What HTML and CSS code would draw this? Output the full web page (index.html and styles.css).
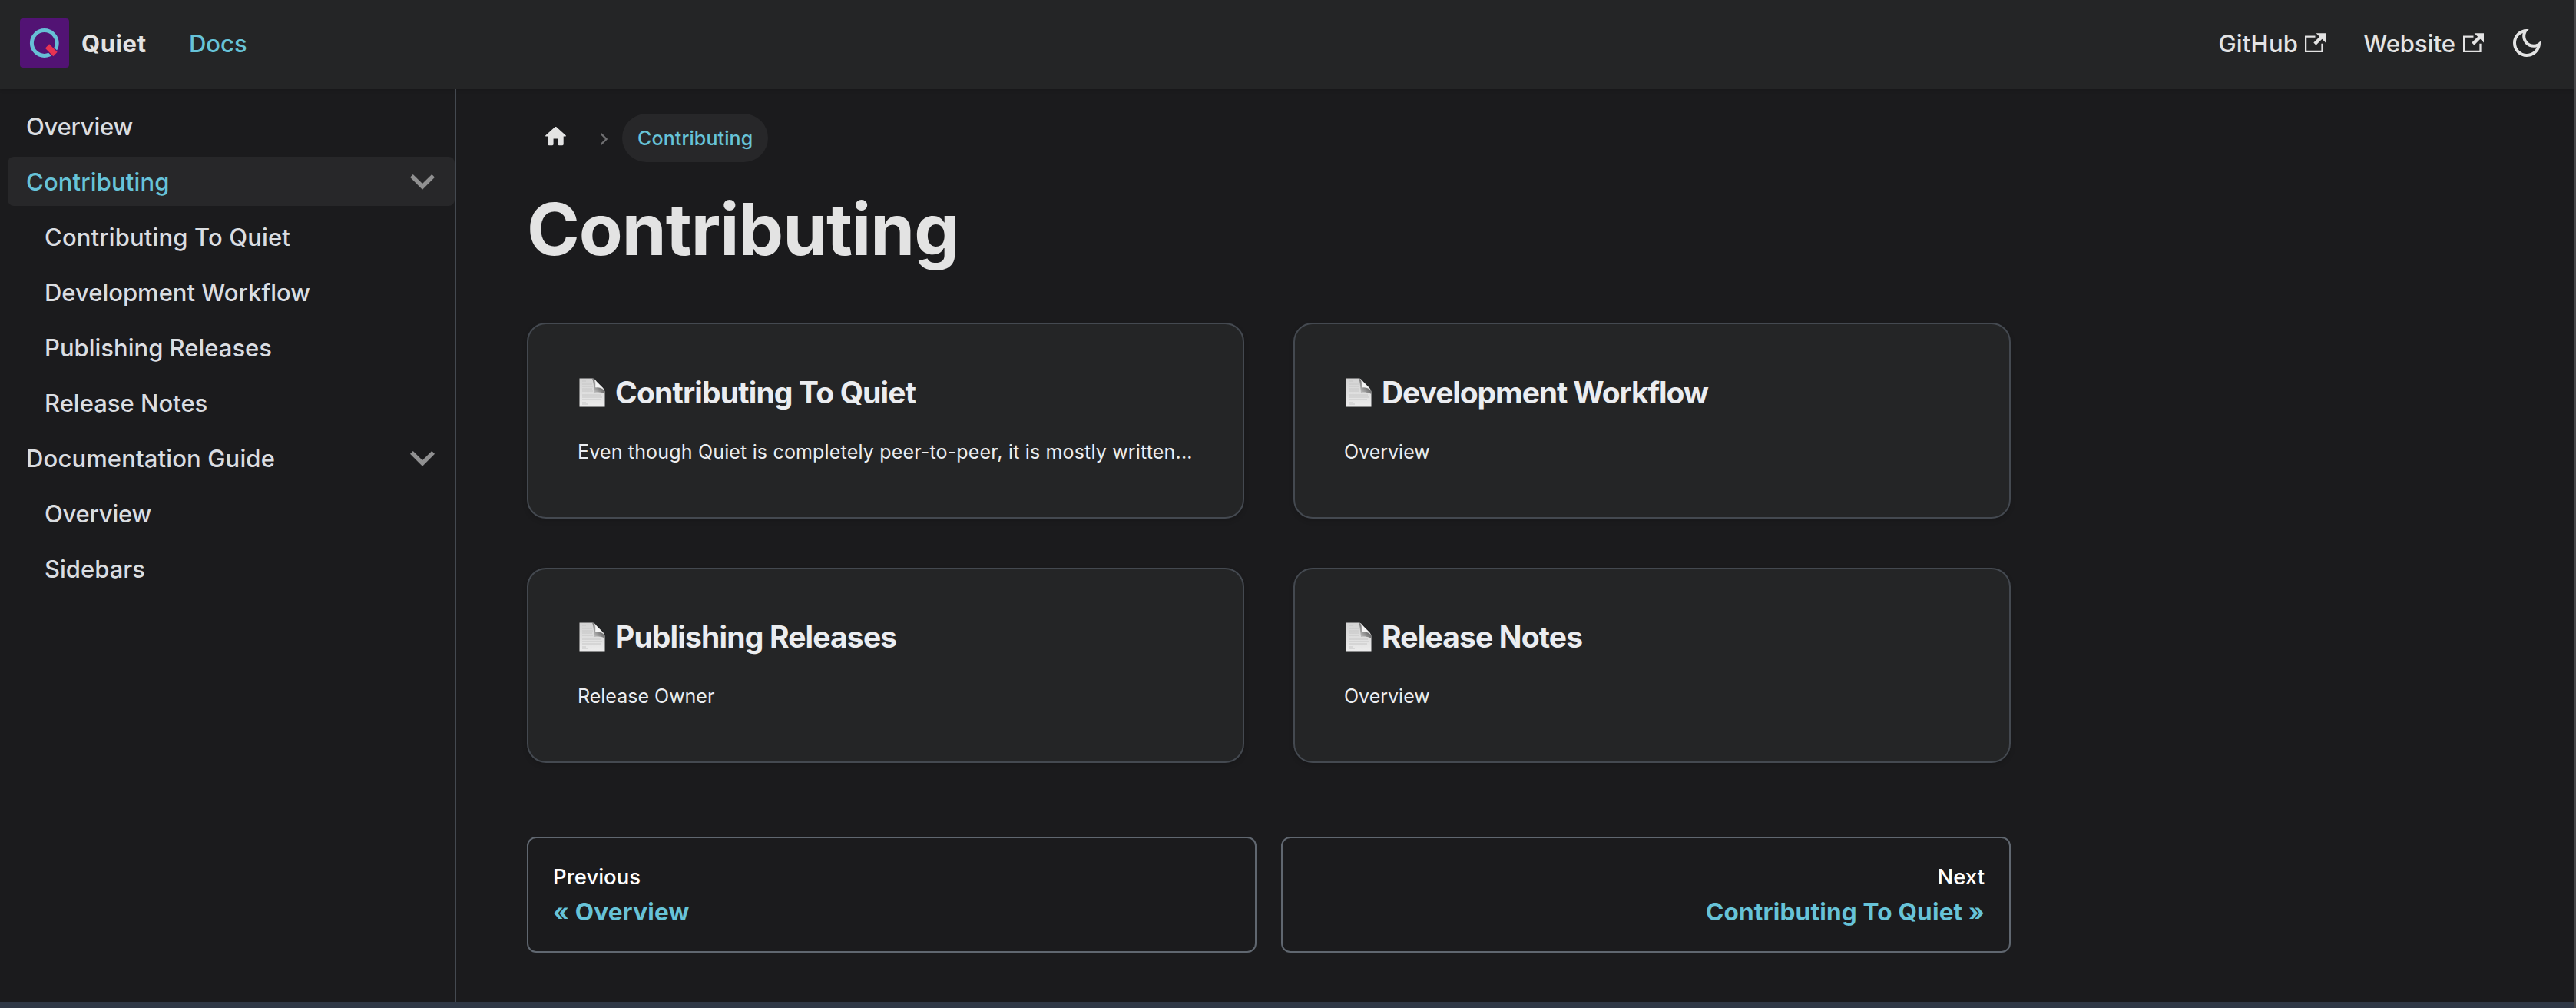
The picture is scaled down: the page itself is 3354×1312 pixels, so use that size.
FILE: index.html
```html
<!DOCTYPE html>
<html lang="en">
<head>
<meta charset="utf-8">
<title>Contributing | Quiet</title>
<link rel="stylesheet" href="styles.css">
</head>
<body>
<svg class="sprite" aria-hidden="true">
  <defs>
    <linearGradient id="paper" x1="0" y1="0" x2="0" y2="1">
      <stop offset="0" stop-color="#d3d3d3"/>
      <stop offset=".6" stop-color="#e0e0e0"/>
      <stop offset="1" stop-color="#ececec"/>
    </linearGradient>
    <linearGradient id="curl" x1="1" y1="0" x2="0" y2="1">
      <stop offset="0" stop-color="#3c3c3c"/>
      <stop offset=".5" stop-color="#7c7c7c"/>
      <stop offset="1" stop-color="#d8d8d8"/>
    </linearGradient>
    <symbol id="page" viewBox="0 0 34 38">
      <path d="M.5 .5H17C20 .5 21 2 23 5L31 13C33 15 33.500 17 33.500 19V37.500H.5Z" fill="url(#paper)"/>
      <path d="M17 .5C20 1 21 4 21 12C27 12 31 14 33.500 17V21C31 19 27 18 20 19C19 12 19 5 17 .5Z" fill="url(#curl)"/>
      <path d="M21 3L32 14C29 12 25 12 21.500 12.500C21.800 9 21.800 6 21 3Z" fill="#f4f4f4"/>
      <path d="M4 4H9M4 8H17M4 11H18M4 14H17M4 17H18M4 22H29M4 25H30M4 28H28M4 32H9M4 34H12" stroke="#c6c6c6" stroke-width="1" fill="none"/>
    </symbol>
    <symbol id="external" viewBox="0 0 24 24"><path d="M21 13v10h-21v-19h12v2h-10v15h17v-8h2zm3-12h-10.988l4.035 4-6.977 7.070 2.828 2.828 6.977-7.070 4.125 4.172v-11z"/></symbol>
    <symbol id="caret" viewBox="0 0 24 24"><path d="M7.410 8.590L12 13.170l4.590-4.580L18 10l-6 6-6-6z"/></symbol>
  </defs>
</svg>

<nav class="navbar">
  <a class="brand">
    <svg class="logo" viewBox="0 0 64 64">
      <rect width="64" height="64" rx="4" fill="#521374"/>
      <circle cx="31.800" cy="32" r="16.400" fill="none" stroke="#67bfd6" stroke-width="5"/>
      <path d="M35.500 36L48 48.500" stroke="#521374" stroke-width="10"/>
      <path d="M35.500 36L46 46.500" stroke="#e93352" stroke-width="7.500"/>
    </svg>
    <b class="brand-name">Quiet</b>
  </a>
  <a class="nav-link nav-link-active">Docs</a>
  <a class="nav-link nav-github">GitHub<svg class="ext"><use href="#external"/></svg></a>
  <a class="nav-link nav-website">Website<svg class="ext"><use href="#external"/></svg></a>
  <svg class="moon" viewBox="0 0 24 24"><path d="M9.370,5.510C9.190,6.150,9.100,6.820,9.100,7.500c0,4.080,3.320,7.400,7.400,7.400c0.680,0,1.350-0.090,1.990-0.270C17.450,17.190,14.930,19,12,19 c-3.860,0-7-3.140-7-7C5,9.070,6.810,6.550,9.370,5.510z M12,3c-4.970,0-9,4.030-9,9s4.030,9,9,9s9-4.030,9-9c0-0.460-0.040-0.920-0.100-1.360 c-0.980,1.370-2.580,2.260-4.400,2.260c-2.980,0-5.400-2.420-5.400-5.400c0-1.810,0.890-3.420,2.260-4.400C12.920,3.040,12.460,3,12,3L12,3z"/></svg>
</nav>

<div class="columns">
  <aside class="sidebar">
    <a class="item snug"><span>Overview</span></a>
    <a class="item item-active"><span>Contributing</span><svg class="caret"><use href="#caret"/></svg></a>
    <a class="item sub roomy"><span>Contributing To Quiet</span></a>
    <a class="item sub"><span>Development Workflow</span></a>
    <a class="item sub"><span>Publishing Releases</span></a>
    <a class="item sub"><span>Release Notes</span></a>
    <a class="item roomy"><span>Documentation Guide</span><svg class="caret"><use href="#caret"/></svg></a>
    <a class="item sub snug"><span>Overview</span></a>
    <a class="item sub"><span>Sidebars</span></a>
  </aside>

  <main class="content">
    <div class="crumbs">
      <svg class="home" viewBox="0 0 24 24"><path d="M10 19v-5h4v5c0 .55.45 1 1 1h3c.55 0 1-.45 1-1v-7h1.700c.46 0 .68-.57.33-.87L12.670 3.600c-.38-.34-.96-.34-1.340 0l-8.360 7.530c-.34.3-.13.87.33.87H5v7c0 .55.45 1 1 1h3c.55 0 1-.45 1-1z"/></svg>
      <svg class="sep" viewBox="0 0 10 18"><path d="M1.500 2L8.500 9L1.500 16"/></svg>
      <span class="crumb">Contributing</span>
    </div>
    <h1>Contributing</h1>
    <div class="cards">
      <a class="card"><h2><svg class="page"><use href="#page"/></svg><span>Contributing To Quiet</span></h2><p class="long">Even though Quiet is completely peer-to-peer, it is mostly written...</p></a>
      <a class="card"><h2 class="tight"><svg class="page"><use href="#page"/></svg><span>Development Workflow</span></h2><p>Overview</p></a>
      <a class="card"><h2><svg class="page"><use href="#page"/></svg><span>Publishing Releases</span></h2><p>Release Owner</p></a>
      <a class="card"><h2><svg class="page"><use href="#page"/></svg><span>Release Notes</span></h2><p>Overview</p></a>
    </div>
    <div class="pager">
      <a class="pager-link"><span class="pager-sub">Previous</span><span class="pager-label">« Overview</span></a>
      <a class="pager-link pager-next"><span class="pager-sub">Next</span><span class="pager-label">Contributing To Quiet »</span></a>
    </div>
  </main>
</div>
<footer class="footer"></footer>
</body>
</html>
```
FILE: styles.css
```css
* { box-sizing: border-box; }

body {
  margin: 0;
  height: 1312px;
  display: flex;
  flex-direction: column;
  overflow: hidden;
  border-right: 2px solid #48484a;
  background: #1b1b1d;
  color: #e3e3e3;
  font-family: Inter, "Liberation Sans", sans-serif;
  font-size: 31px;
}

.sprite { position: absolute; width: 0; height: 0; }
svg { display: block; flex: none; fill: currentColor; }
h1, h2, p { margin: 0; }

/* Top bar */
.navbar {
  flex: none;
  height: 116px;
  display: flex;
  align-items: center;
  padding: 0 38px 4px 26px;
  background: #242526;
  box-shadow: 0 2px 4px rgba(0, 0, 0, .1);
  font-weight: 500;
}
.brand { display: flex; align-items: center; gap: 16px; width: 220px; }
.logo { width: 64px; height: 64px; }
.brand-name { font-weight: 700; letter-spacing: .6px; }
.nav-link { display: flex; align-items: center; }
.nav-link-active { color: #67c3d8; }
.ext { width: 27px; height: 27px; margin-top: -2px; }
.nav-github { margin-left: auto; gap: 9px; letter-spacing: .2px; }
.nav-website { margin-left: 49px; gap: 10px; }
.moon { width: 48px; height: 48px; margin-left: 32px; }

/* Page columns */
.columns { flex: 1; display: flex; min-height: 0; }

.sidebar {
  width: 594px;
  padding: 16px 0 0 10px;
  border-right: 2px solid #444950;
  display: flex;
  flex-direction: column;
  gap: 8px;
  color: #dadde1;
  font-weight: 500;
}
.item {
  height: 64px;
  display: flex;
  align-items: center;
  justify-content: space-between;
  padding: 0 10px 0 24px;
  border-radius: 8px;
}
.item.sub { padding-left: 48px; }
.item.snug { letter-spacing: -.2px; }
.item.roomy { letter-spacing: .14px; }
.item-active { background: #272729; color: #67c3d8; letter-spacing: .15px; }
.caret { width: 64px; height: 64px; color: #909091; }

/* Article */
.content { width: 2024px; padding: 32px 0 0 92px; }
.crumbs { display: flex; align-items: center; height: 63px; padding-left: 20px; }
.home { width: 35px; height: 35px; margin-top: -4px; }
.sep { width: 10px; height: 18px; margin: 2px 19px 0 40px; fill: none; stroke: #6f6f71; stroke-width: 2.4; }
.crumb {
  display: flex;
  align-items: center;
  height: 63px;
  padding: 0 20px;
  border-radius: 32px;
  background: #272729;
  color: #67c3d8;
  font-size: 25px;
  font-weight: 500;
  letter-spacing: .1px;
}
h1 { margin-top: 27px; font-size: 93px; line-height: 120px; font-weight: 700; letter-spacing: -1px; }

.cards { display: grid; grid-template-columns: 934px 934px; gap: 64px; margin-top: 62px; }
.card {
  height: 254.5px;
  padding: 61.9px 62px 62px 64px;
  border: 2px solid #444950;
  border-radius: 25px;
  background: #242526;
  box-shadow: 0 3px 6px rgba(0, 0, 0, .15);
  color: #ebedf0;
}
h2 { display: flex; align-items: center; gap: 13px; padding-top: 2px; font-size: 39px; line-height: 50px; font-weight: 700; letter-spacing: -.84px; }
h2.tight { letter-spacing: -1.08px; }
.page { width: 34px; height: 38px; margin-left: 2px; }
.card p { margin-top: 36px; font-size: 25px; line-height: 32px; }
.card .long { letter-spacing: .17px; }

.pager { display: grid; grid-template-columns: 950px 950px; gap: 32px; margin-top: 96px; }
.pager-link {
  display: flex;
  flex-direction: column;
  height: 151px;
  padding: 32px;
  border: 2px solid #606770;
  border-radius: 12px;
  color: #67c3d8;
}
.pager-next { align-items: flex-end; }
.pager-sub { color: #fff; font-size: 27.5px; line-height: 36px; font-weight: 500; }
.pager-label { margin-top: 3px; font-size: 31.5px; font-weight: 700; line-height: 50px; letter-spacing: .2px; }

.footer { flex: none; height: 8px; background: #303846; }
```
